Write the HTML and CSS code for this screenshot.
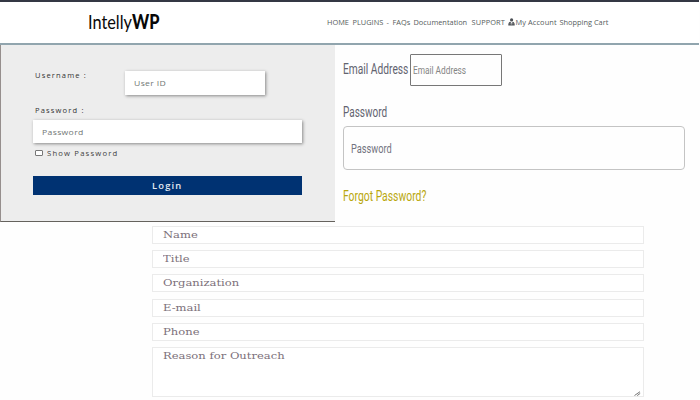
FILE: index.html
```html
<!DOCTYPE html>
<html lang="en">
<head>
<meta charset="utf-8">
<title>IntellyWP</title>
<link rel="stylesheet" href="styles.css">
</head>
<body>
<header class="header">
  <a class="logo"><span class="t">Intelly<b>WP</b></span></a>
  <nav class="nav">
    <a class="n1">HOME</a><a class="n2">PLUGINS</a><a class="n3">-</a><a class="n4">FAQs</a><a class="n5">Documentation</a><a class="n6">SUPPORT</a>
    <svg class="user" viewBox="0 0 7 8"><circle cx="3.6" cy="1.9" r="1.6"/><path d="M.3 7.5C.2 5 1.3 4 2.2 3.8l1.4 1.5L5 3.8c1.2.4 1.8 1.6 1.7 3.7z"/><path class="tie" d="M1.7 5.8h1.1M4.3 5.8h1.1M3.5 4.6v2"/></svg>
    <a class="n7">My Account</a><a class="n8">Shopping Cart</a>
  </nav>
</header>
<main>
  <div class="top">
    <section class="login">
      <div class="user-row">
        <label class="caption"><span class="t">Username :</span></label>
        <div class="box user-box"><span class="t">User ID</span></div>
      </div>
      <label class="caption pass-caption"><span class="t">Password :</span></label>
      <div class="box pass-box"><span class="t">Password</span></div>
      <label class="show"><i class="check"></i><span class="t">Show Password</span></label>
      <div class="button"><span class="t">Login</span></div>
    </section>
    <section class="account">
      <div class="email-row">
        <label class="email-label"><span class="t">Email Address</span></label>
        <div class="email-box"><span class="t">Email Address</span></div>
      </div>
      <label class="pw-label"><span class="t">Password</span></label>
      <div class="pw-box"><span class="t">Password</span></div>
      <a class="forgot"><span class="t">Forgot Password?</span></a>
    </section>
  </div>
  <section class="contact">
    <div class="field"><span class="t">Name</span></div>
    <div class="field"><span class="t">Title</span></div>
    <div class="field"><span class="t">Organization</span></div>
    <div class="field"><span class="t">E-mail</span></div>
    <div class="field"><span class="t">Phone</span></div>
    <div class="field area"><span class="t">Reason for Outreach</span>
      <svg class="grip" viewBox="0 0 7 5"><path d="M.5 4.5 6 .7M3.2 4.6 6.2 2.4"/></svg>
    </div>
  </section>
</main>
</body>
</html>
```

FILE: styles.css
```css
* { box-sizing: border-box; }
body { margin: 0; width: 700px; height: 400px; overflow: hidden; background: #fefefe; font-family: "Open Sans", sans-serif; }
.t { display: inline-block; white-space: nowrap; transform-origin: 0 50%; }

.header { display: flex; width: 699px; height: 45px; border-top: 2px solid #343844; border-bottom: 2px solid #91a5ae; background: #fff; }
.logo { flex: none; width: 327px; padding: 7px 0 0 88px; font: 20px/24px Lato, sans-serif; color: #080808; }
.logo .t { transform: scaleX(.815); }
.logo b { font-weight: 900; }
.nav { display: flex; padding-top: 14px; font: 7.4px/12px "Open Sans", sans-serif; color: #565c5c; white-space: nowrap; }
.nav a { flex: none; }
.n1 { width: 25.5px; }
.n2 { width: 34px; }
.n3 { width: 6px; }
.n4 { width: 21px; }
.n5 { width: 58px; }
.n6 { width: 36px; letter-spacing: .1px; }
.n7 { width: 44px; letter-spacing: .1px; }
.user { width: 7px; height: 8px; margin: 2px 1px 0 0; fill: #4b4f54; flex: none; }
.tie { stroke: #ddd; stroke-width: .6; fill: none; }

.top { display: flex; height: 177px; }
.login { width: 335px; height: 177px; padding: 25px 32px 0; background: #ededed; border-left: 1px solid #968f8d; border-bottom: 1px solid #65625d; }
.user-row { display: flex; height: 35px; }
.caption { display: block; width: 92px; padding-left: 2px; font-size: 6.5px; line-height: 12px; letter-spacing: 1px; color: #333; }
.caption .t { transform: scaleX(1.16); }
.show .t { transform: scaleX(1.18); }
.box { display: flex; align-items: center; background: #fff; box-shadow: 1px 1px 3px #888; padding-left: 9px; color: #727775; font-size: 7.5px; letter-spacing: .3px; }
.box .t { transform: scaleX(1.15); }
.user-box { width: 140px; height: 24px; margin-top: .5px; }
.pass-box { width: 269px; height: 23px; }
.pass-caption { height: 15px; }
.show { display: flex; align-items: center; height: 12px; margin-top: 4px; padding-left: 2px; font-size: 6.5px; letter-spacing: 1px; color: #3f3f3f; }
.check { width: 8px; height: 6px; margin: -1px 4px 0 0; border: 1px solid #777; border-radius: 1px; background: #fff; }
.button { display: flex; align-items: center; width: 269px; height: 19px; margin-top: 17px; padding-left: 119px; background: #003272; color: #e4eaf1; font-size: 8px; font-weight: 600; letter-spacing: 1px; }
.button .t { transform: scaleX(1.17); }

.account { padding: 9px 0 0 8px; font-family: Roboto, sans-serif; color: #62636f; }
.email-row { display: flex; height: 48px; }
.email-label { width: 67px; font-size: 14px; line-height: 31px; }
.email-label .t { transform: scaleX(.73); }
.email-box { width: 92px; height: 32px; border: 1px solid #777; border-radius: 1px; padding-left: 2px; font-size: 11px; line-height: 31px; color: #858585; }
.email-box .t { transform: scaleX(.755); }
.pw-label { display: block; height: 24px; font-size: 14px; line-height: 20px; }
.pw-label .t { transform: scaleX(.715); }
.pw-box { width: 342px; height: 44px; border: 1px solid #c4c4c4; border-radius: 4px; padding-left: 7px; font-size: 13px; line-height: 43px; color: #737480; }
.pw-box .t { transform: scaleX(.71); }
.forgot { display: block; margin-top: 16px; font-size: 14px; line-height: 20px; color: #b9a70c; }
.forgot .t { transform: scaleX(.74); }

.contact { display: flex; flex-direction: column; gap: 6.2px; width: 492px; margin: 4px 0 0 152px; }
.field { position: relative; flex: none; height: 18px; border: 1px solid #ebebeb; padding-left: 10px; background: #fff; font: 8.5px/16px "DejaVu Serif", serif; color: #7c707a; }
.field .t { transform: scaleX(1.36); }
.area { height: 50px; }
.grip { position: absolute; right: 2px; bottom: 0; width: 7px; height: 5px; fill: none; stroke: #777; }
```
